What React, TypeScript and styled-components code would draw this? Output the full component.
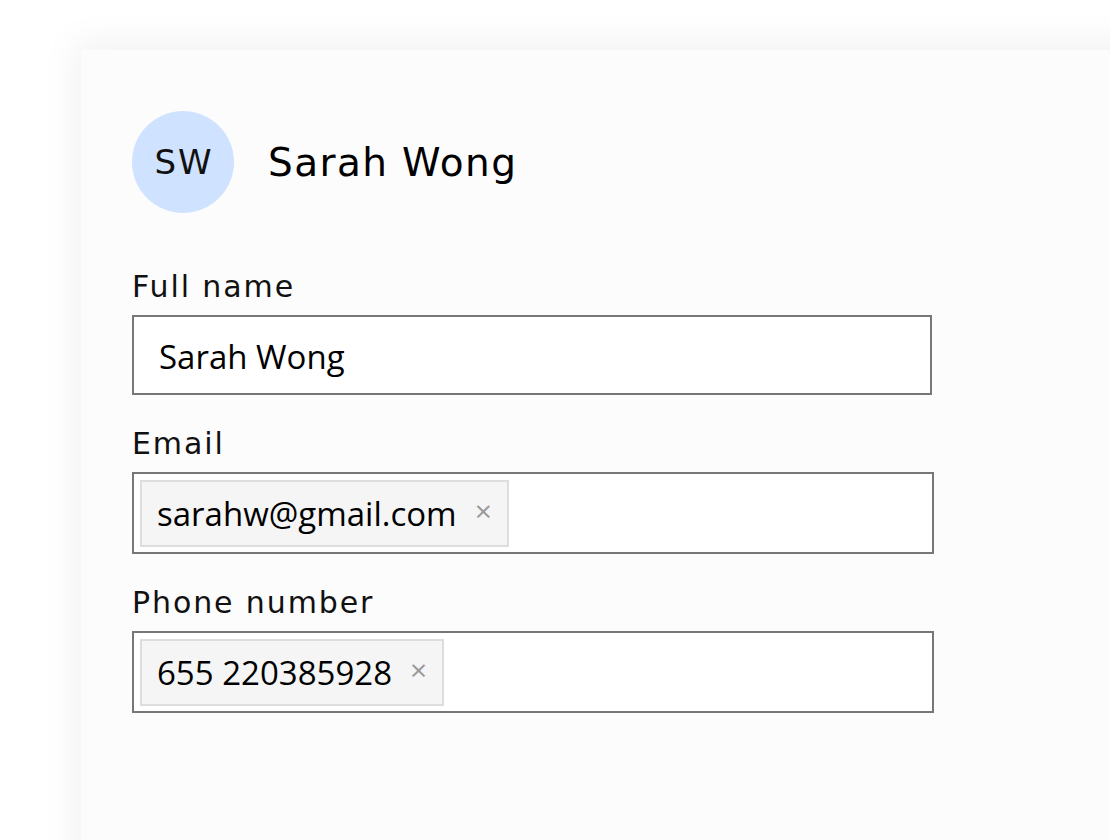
import React from 'react'
import styled, { createGlobalStyle } from 'styled-components'

const GlobalStyle = createGlobalStyle`
  html, body {
    margin: 0;
    padding: 0;
    background: #ffffff;
    overflow: hidden;
  }
  body {
    width: 1110px;
    height: 840px;
  }
`

type ChipProps = {
  label: string
}

function Chip({ label }: ChipProps) {
  return (
    <S.Chip>
      <S.ChipText>{label}</S.ChipText>
      <S.ChipClose aria-label='remove'>×</S.ChipClose>
    </S.Chip>
  )
}

export default function App() {
  return (
    <>
      <GlobalStyle />
      <S.Page>
        <S.Card>
          <S.Header>
            <S.Avatar>SW</S.Avatar>
            <S.Title>Sarah Wong</S.Title>
          </S.Header>
          <S.Form>
            <S.Field>
              <S.Label>Full name</S.Label>
              <S.TextBox>Sarah Wong</S.TextBox>
            </S.Field>
            <S.Field>
              <S.Label>Email</S.Label>
              <S.ChipBox>
                <Chip label='sarahw@gmail.com' />
              </S.ChipBox>
            </S.Field>
            <S.Field>
              <S.Label>Phone number</S.Label>
              <S.ChipBox>
                <Chip label='655 220385928' />
              </S.ChipBox>
            </S.Field>
          </S.Form>
        </S.Card>
      </S.Page>
    </>
  )
}

const labelFont = `"DejaVu Sans", "Noto Sans", sans-serif`
const inputFont = `"Open Sans", "Noto Sans", sans-serif`

export const S = {
  Page: styled.div`
    width: 1110px;
    height: 840px;
    padding: 50px 0 0 81px;
    box-sizing: border-box;
  `,
  Card: styled.div`
    width: 1100px;
    height: 900px;
    background: #fcfcfc;
    box-shadow: -8px -10px 32px rgba(0, 0, 0, 0.05);
    padding: 61px 0 0 51px;
    box-sizing: border-box;
  `,
  Header: styled.div`
    display: flex;
    align-items: center;
    gap: 34px;
  `,
  Avatar: styled.div`
    width: 102px;
    height: 102px;
    border-radius: 50%;
    background: #cfe2ff;
    display: flex;
    align-items: center;
    justify-content: center;
    font-family: ${labelFont};
    font-size: 34px;
    letter-spacing: 2px;
    padding-left: 2px;
    box-sizing: border-box;
    color: #111;
  `,
  Title: styled.div`
    font-family: ${labelFont};
    font-size: 39px;
    letter-spacing: 1.4px;
    color: #000;
  `,
  Form: styled.div`
    display: flex;
    flex-direction: column;
    gap: 33px;
    margin-top: 58px;
  `,
  Field: styled.div`
    display: flex;
    flex-direction: column;
    gap: 12px;
  `,
  Label: styled.div`
    font-family: ${labelFont};
    font-size: 30px;
    letter-spacing: 1.9px;
    line-height: 32px;
    color: #111;
  `,
  TextBox: styled.div`
    width: 800px;
    height: 80px;
    box-sizing: border-box;
    border: 2px solid #777;
    background: #fff;
    display: flex;
    align-items: center;
    padding: 2px 0 0 25px;
    font-family: ${inputFont};
    font-size: 33px;
    color: #000;
  `,
  ChipBox: styled.div`
    width: 802px;
    height: 82px;
    box-sizing: border-box;
    border: 2px solid #777;
    background: #fff;
    display: flex;
    align-items: center;
    padding: 0 6px;
  `,
  Chip: styled.div`
    height: 67px;
    box-sizing: border-box;
    border: 2px solid #ddd;
    background: #f5f5f5;
    display: flex;
    align-items: center;
    gap: 18px;
    padding: 0 15px 0 15px;
  `,
  ChipText: styled.span`
    font-family: ${inputFont};
    font-size: 33px;
    color: #000;
  `,
  ChipClose: styled.span`
    font-family: ${inputFont};
    font-size: 30px;
    color: #999;
    line-height: 1;
    margin-top: -4px;
  `
}
